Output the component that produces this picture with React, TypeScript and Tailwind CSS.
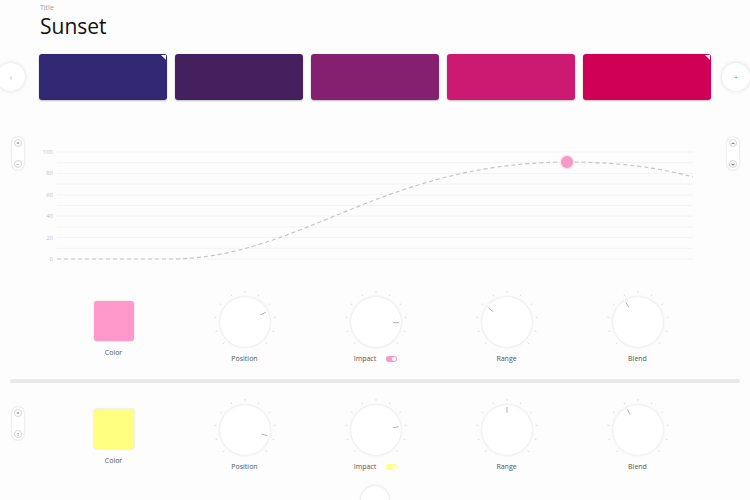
import React from 'react';

const swatches = ['#312773', '#45205f', '#852070', '#cc1a73', '#cf0056'];

interface KnobSpec {
  label: string;
  angle: number;
  toggle?: boolean;
}

const rowOne: KnobSpec[] = [
  { label: 'Position', angle: 65 },
  { label: 'Impact', angle: 92, toggle: true },
  { label: 'Range', angle: -53 },
  { label: 'Blend', angle: -32 },
];

const rowTwo: KnobSpec[] = [
  { label: 'Position', angle: 104 },
  { label: 'Impact', angle: 82, toggle: true },
  { label: 'Range', angle: 0 },
  { label: 'Blend', angle: -27 },
];

const font = { fontFamily: '"Open Sans", "Noto Sans", sans-serif' };

function polar(r: number, deg: number) {
  const t = (deg * Math.PI) / 180;
  return { x: 33 + r * Math.sin(t), y: 33 - r * Math.cos(t) };
}

function Knob({ angle }: { angle: number }) {
  const ticks = Array.from({ length: 11 }, (_, i) => -135 + 27 * i);
  const a = polar(17, angle);
  const b = polar(23, angle);
  return (
    <div className="relative flex h-[66px] w-[66px] items-center justify-center">
      <svg className="absolute inset-0" width="66" height="66" viewBox="0 0 66 66">
        {ticks.map((t) => {
          const p = polar(29, t);
          const q = polar(31, t);
          return <line key={t} x1={p.x} y1={p.y} x2={q.x} y2={q.y} stroke="#dedede" strokeWidth="1" />;
        })}
      </svg>
      <div className="h-[50px] w-[50px] rounded-full bg-white shadow-[0_0_3px_rgba(0,0,0,0.14)]" />
      <svg className="absolute inset-0" width="66" height="66" viewBox="0 0 66 66">
        <line x1={a.x} y1={a.y} x2={b.x} y2={b.y} stroke="#b4b4b4" strokeWidth="1" />
      </svg>
    </div>
  );
}

function Pill({ top, bottom }: { top: React.ReactNode; bottom: React.ReactNode }) {
  return (
    <div className="flex h-[33px] w-[12px] flex-col items-center justify-between rounded-full bg-white py-[2px] shadow-[0_0_2px_rgba(0,0,0,0.22)]">
      <div className="flex h-[8px] w-[8px] items-center justify-center rounded-full border border-[#d6d6d6] text-[5px] leading-none text-[#444]">
        {top}
      </div>
      <div className="flex h-[8px] w-[8px] items-center justify-center rounded-full border border-[#d6d6d6] text-[5px] leading-none text-[#444]">
        {bottom}
      </div>
    </div>
  );
}

function Controls({ color, toggle, knobs }: { color: string; toggle: string; knobs: KnobSpec[] }) {
  return (
    <div className="flex">
      <div className="flex w-[131px] flex-col items-center">
        <div className="mt-[12px] h-[40px] w-[40px] rounded-[3px] shadow-[0_0_2px_rgba(0,0,0,0.2)]" style={{ background: color }} />
        <div className="mt-[7px] text-[7px] leading-[10px] text-[#555]">Color</div>
      </div>
      {knobs.map((k) => (
        <div key={k.label} className="flex w-[131px] flex-col items-center">
          <Knob angle={k.angle} />
          <div className="-mt-[1px] flex items-center gap-[10px]">
            <span className="text-[7px] leading-[10px] text-[#555]">{k.label}</span>
            {k.toggle && (
              <span className="flex h-[6px] w-[11px] items-center justify-end rounded-full pr-[1px]" style={{ background: toggle }}>
                <span className="h-[4px] w-[4px] rounded-full bg-white" />
              </span>
            )}
          </div>
        </div>
      ))}
    </div>
  );
}

function Chart() {
  const grid = Array.from({ length: 11 }, (_, i) => i * 10);
  return (
    <svg width="691" height="135" viewBox="24 137 691 135" className="block">
      {grid.map((v) => (
        <line key={v} x1="57" x2="693" y1={259 - v * 1.07} y2={259 - v * 1.07} stroke="#f3f3f3" strokeWidth="1" />
      ))}
      {[0, 20, 40, 60, 80, 100].map((v) => (
        <text key={v} x="53" y={261 - v * 1.07} textAnchor="end" fontSize="6" fill="#c4c4c4" style={font}>
          {v}
        </text>
      ))}
      <path
        d="M57,259 L170,259 C300,259 380,163 567,162 C620,162 660,168 693,177"
        fill="none"
        stroke="#c6c6c6"
        strokeWidth="1.2"
        strokeDasharray="4 3"
      />
      <circle cx="567" cy="162" r="7.5" fill="#fde4f0" />
      <circle cx="567" cy="162" r="6" fill="#f49ac3" />
    </svg>
  );
}

function Chevron({ up }: { up?: boolean }) {
  return (
    <svg width="4" height="3" viewBox="0 0 5 4">
      <path d={up ? 'M0.5 3 L2.5 1 L4.5 3' : 'M0.5 1 L2.5 3 L4.5 1'} fill="none" stroke="#444" strokeWidth="1.2" />
    </svg>
  );
}

export default function App() {
  return (
    <div className="relative h-[500px] w-[750px] overflow-hidden bg-[#fdfdfd]" style={font}>
      <div className="pl-[40px] pt-[3px]">
        <div className="text-[7px] leading-[9px] text-[#999]">Title</div>
        <div className="text-[21px] leading-[28px] text-[#111]">Sunset</div>
      </div>

      <div className="mt-[14px] flex h-[46px] items-center">
        <div className="-ml-[3px] flex h-[28px] w-[28px] items-center justify-center rounded-full bg-white text-[8px] text-[#aaa] shadow-[0_0_4px_rgba(0,0,0,0.14)]">
          ‹
        </div>
        <div className="ml-[14px] flex gap-[8px]">
          {swatches.map((c, i) => (
            <div key={c} className="relative h-[46px] w-[128px] rounded-[3px] shadow-[0_1px_2px_rgba(0,0,0,0.25)]" style={{ background: c }}>
              {(i === 0 || i === 4) && (
                <div className="absolute right-[1px] top-[1px] h-0 w-0 border-l-[5px] border-t-[5px] border-l-transparent border-t-white" />
              )}
            </div>
          ))}
        </div>
        <div className="ml-[11px] flex h-[28px] w-[28px] items-center justify-center rounded-full bg-white text-[8px] text-[#999] shadow-[0_0_4px_rgba(0,0,0,0.14)]">
          +
        </div>
      </div>

      <div className="mt-[37px] flex items-start">
        <div className="ml-[12px]">
          <Pill top="×" bottom="−" />
        </div>
        <Chart />
        <div className="ml-[12px]">
          <Pill top={<Chevron up />} bottom={<Chevron />} />
        </div>
      </div>

      <div className="mt-[17px] pl-[48px]">
        <Controls color="#ff99cc" toggle="#f59bc6" knobs={rowOne} />
      </div>

      <div className="mx-[10px] mt-[15px] h-[4px] rounded-full bg-[#e9e9e9]" />

      <div className="mt-[14px] flex items-start">
        <div className="ml-[12px] mt-[10px]">
          <Pill top="×" bottom="↕" />
        </div>
        <div className="ml-[24px]">
          <Controls color="#ffff80" toggle="#ffff80" knobs={rowTwo} />
        </div>
        <div className="ml-[89px] mt-[10px]">
          <Pill top={<Chevron up />} bottom={<Chevron />} />
        </div>
      </div>

      <div className="ml-[361px] mt-[14px] h-[28px] w-[28px] rounded-full bg-white shadow-[0_0_3px_rgba(0,0,0,0.16)]" />
    </div>
  );
}
